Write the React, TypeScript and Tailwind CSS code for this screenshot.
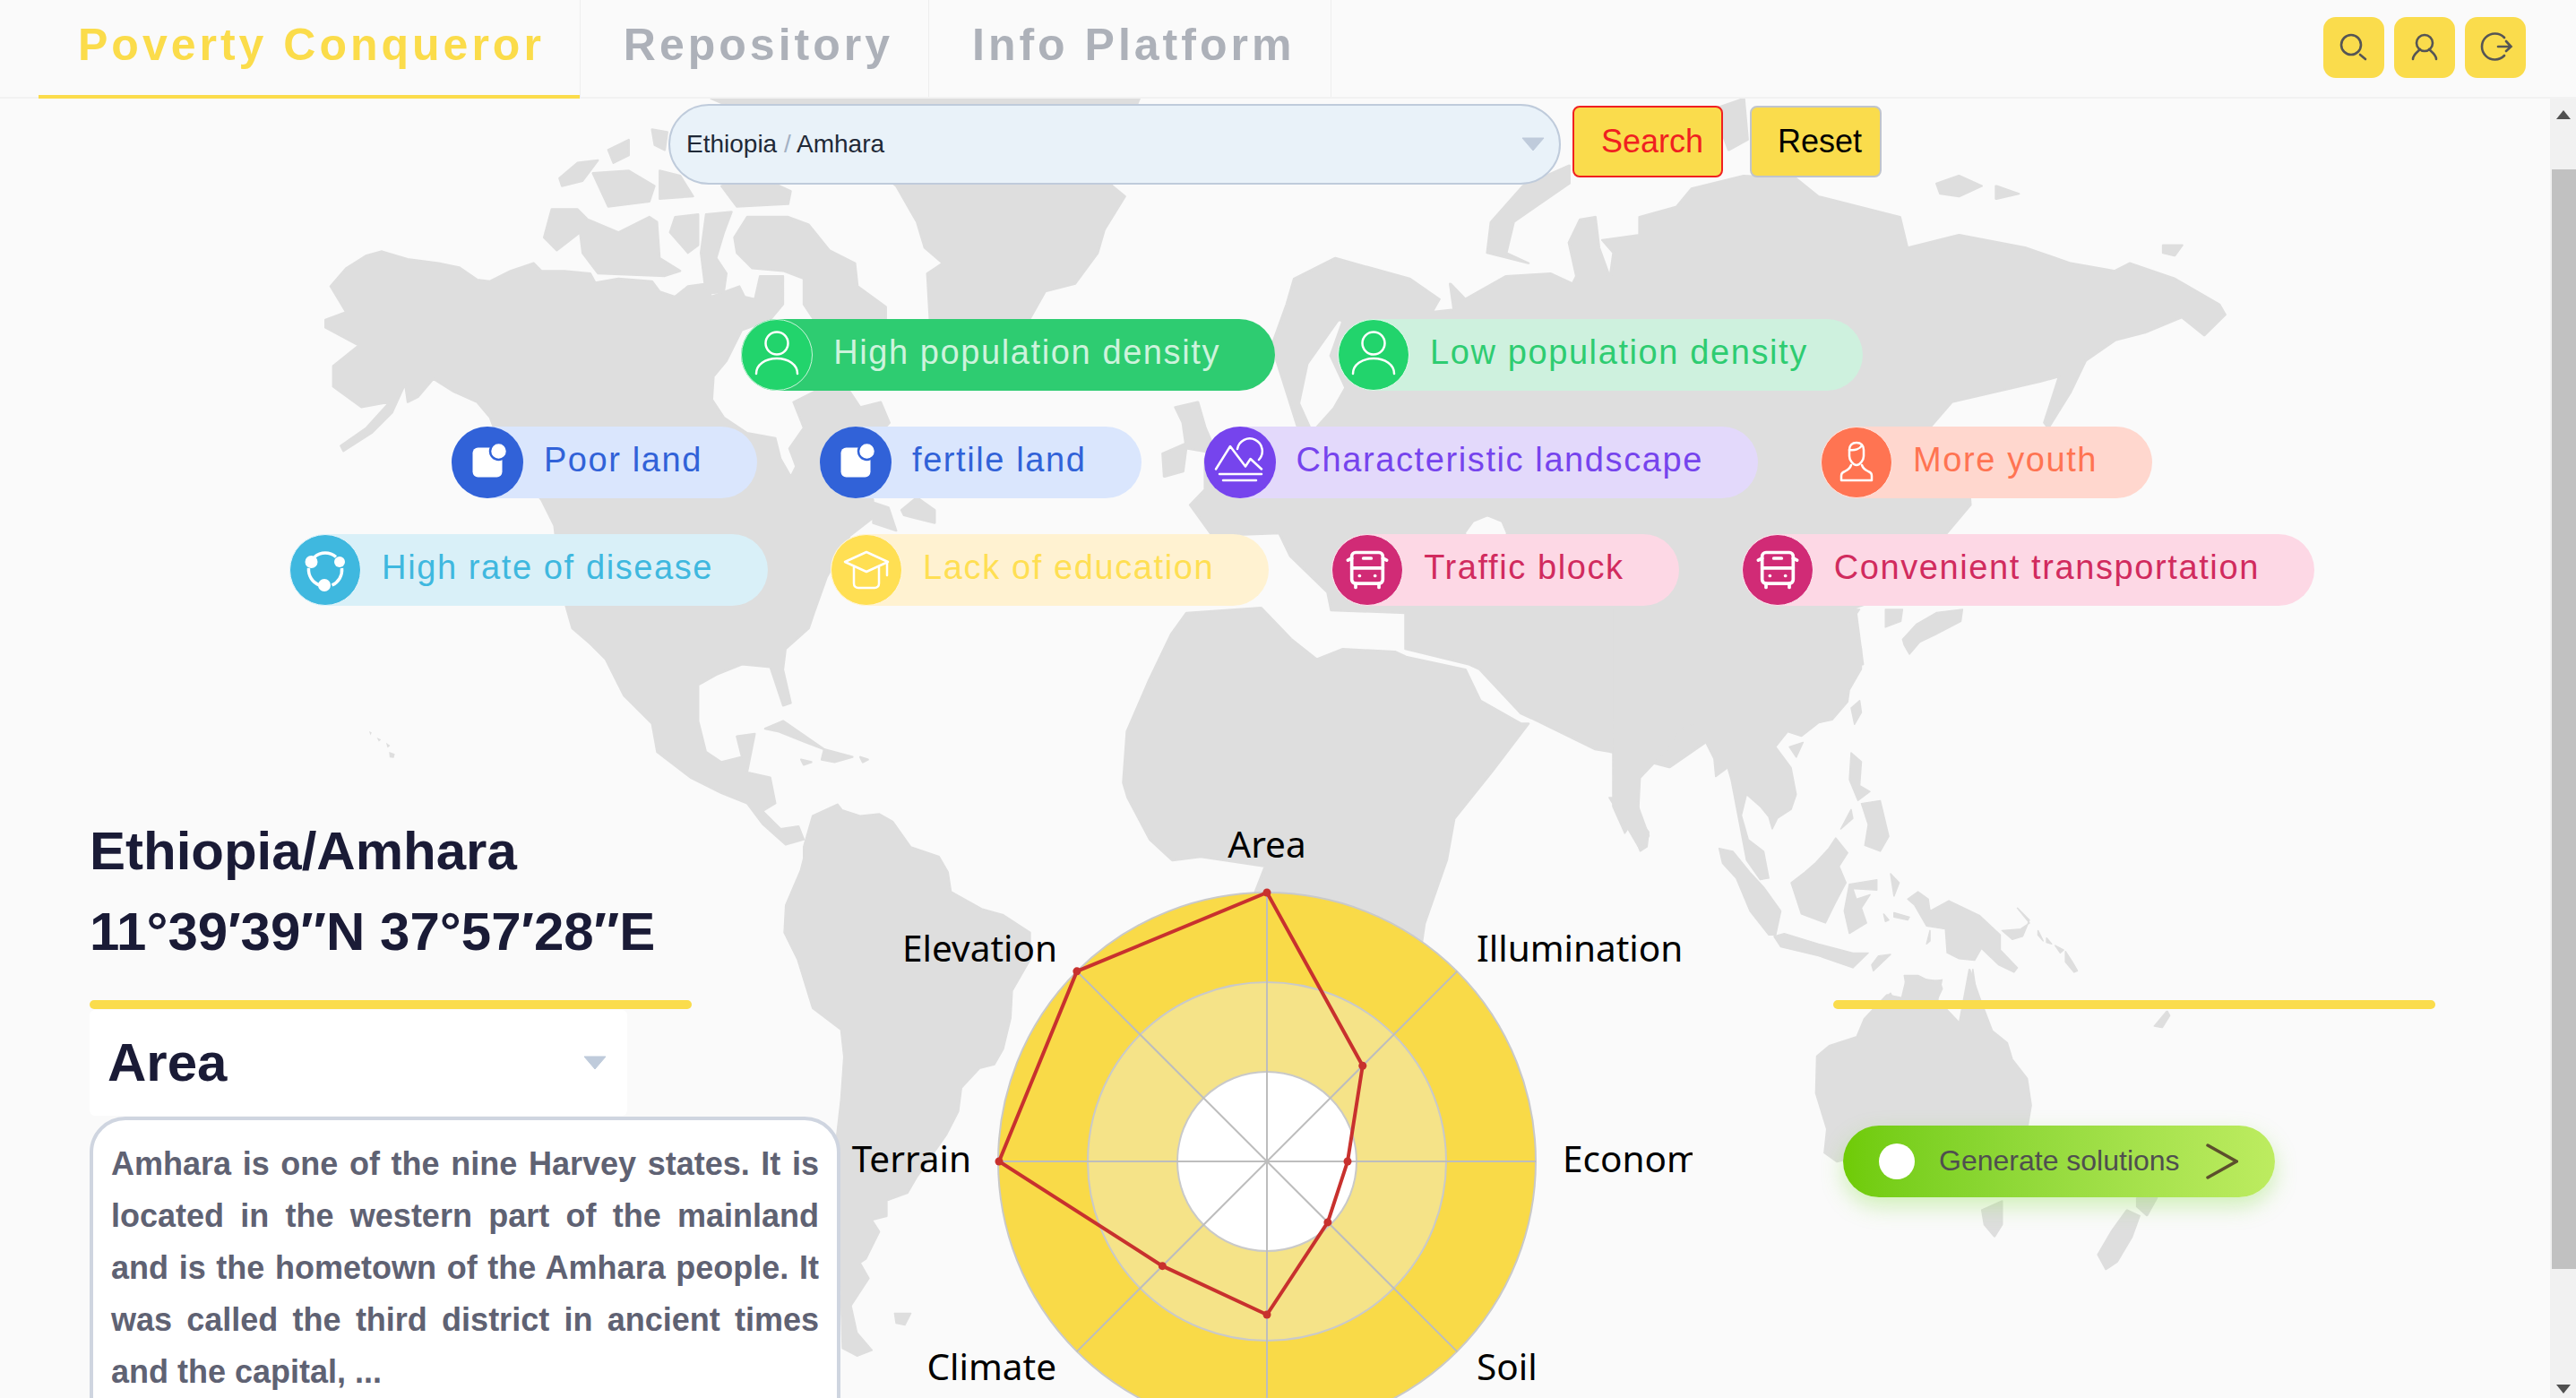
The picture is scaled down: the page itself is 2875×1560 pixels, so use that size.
import { BusFront } from "lucide-react";
import type { ReactNode } from "react";

const iconProps = {
  fill: "none",
  stroke: "currentColor",
  strokeWidth: 2.5,
  strokeLinecap: "round" as const,
  strokeLinejoin: "round" as const,
};

function PersonIcon() {
  return (
    <svg width="58" height="58" viewBox="0 0 58 58" {...iconProps} className="text-white">
      <circle cx="29" cy="16" r="12.5" />
      <path d="M6 50c0-10 10-17 23-17s23 7 23 17" />
    </svg>
  );
}

function LandIcon() {
  return (
    <svg width="58" height="58" viewBox="0 0 58 58">
      <rect x="12.500" y="12.500" width="33" height="33" rx="6" fill="#fff" />
      <circle cx="41.500" cy="16.500" r="9.500" fill="#fff" stroke="#3162d8" strokeWidth="2.500" />
    </svg>
  );
}

function LandscapeIcon() {
  return (
    <svg width="58" height="58" viewBox="0 0 58 58" {...iconProps} className="text-white">
      <path d="M2 36.500 18 11l17 22.500 5.600-8.500L53 36.500" />
      <path d="M26 14a14 14 0 1 1 24 12" />
      <path d="M6 42h47M10 49h37" />
    </svg>
  );
}

function YouthIcon() {
  return (
    <svg width="58" height="58" viewBox="0 0 58 58" {...iconProps} className="text-white">
      <path d="M21 15c0-5 3-8 8-8s8 3 8 8v7c0 4-4 10-8 10s-8-6-8-10z" />
      <path d="M21 15c6 1 12-1 14-5" />
      <path d="M23 32c-1 3-3 5-7 7-3 1-4 3-4 5v5h34v-5c0-2-1-4-4-5-4-2-6-4-7-7" />
    </svg>
  );
}

function DiseaseIcon() {
  return (
    <svg width="58" height="58" viewBox="0 0 58 58">
      <path d="M17 14.500a18.500 18.500 0 0 1 24 0M10.500 27a18.500 18.500 0 0 0 12 19M47.500 27a18.500 18.500 0 0 1-11 19" fill="none" stroke="#fff" strokeWidth="3.500" />
      <circle cx="13.500" cy="20" r="7" fill="#fff" />
      <circle cx="45" cy="20" r="6" fill="#fff" />
      <circle cx="28" cy="46" r="7" fill="#fff" />
    </svg>
  );
}

function CapIcon() {
  return (
    <svg width="58" height="58" viewBox="0 0 58 58" {...iconProps} className="text-white">
      <path d="M29 9 5 20l24 11 24-11z" />
      <path d="M15 26v18c0 3 2 5 5 5h18c3 0 5-2 5-5V26" />
      <path d="M52 21v14" />
    </svg>
  );
}

type Tag = {
  label: string;
  icon: ReactNode;
  pill: string;
  circle: string;
  text: string;
};

const bus = <BusFront size={52} strokeWidth={1.7} color="#fff" />;

const rows: Tag[][] = [
  [
    { label: "High population density", icon: <PersonIcon />, pill: "bg-[#2ecc71]", circle: "bg-[#22d46c] border border-[#c9f5da]", text: "text-[#cdf3dc]" },
    { label: "Low population density", icon: <PersonIcon />, pill: "bg-[#cef1de]", circle: "bg-[#22d46c] border border-[#e4f9ec]", text: "text-[#2ecc71]" },
  ],
  [
    { label: "Poor land", icon: <LandIcon />, pill: "bg-[#dae6fd]", circle: "bg-[#3162d8]", text: "text-[#3162d8]" },
    { label: "fertile land", icon: <LandIcon />, pill: "bg-[#dae6fd]", circle: "bg-[#3162d8]", text: "text-[#3162d8]" },
    { label: "Characteristic landscape", icon: <LandscapeIcon />, pill: "bg-[#e3d9fb]", circle: "bg-[#7644ed]", text: "text-[#7644ed]" },
    { label: "More youth", icon: <YouthIcon />, pill: "bg-[#ffd7ce]", circle: "bg-[#ff7452] border border-[#ffe5df]", text: "text-[#ff7452]" },
  ],
  [
    { label: "High rate of disease", icon: <DiseaseIcon />, pill: "bg-[#d9f0f8]", circle: "bg-[#3fb8df] border border-[#e6f6fb]", text: "text-[#3fb8df]" },
    { label: "Lack of education", icon: <CapIcon />, pill: "bg-[#fff2d1]", circle: "bg-[#ffdf53] border border-[#fff6dc]", text: "text-[#ffdf53]" },
    { label: "Traffic block", icon: bus, pill: "bg-[#fdd8e5]", circle: "bg-[#d12b76] border border-[#fde6ee]", text: "text-[#d12b5e]" },
    { label: "Convenient transportation", icon: bus, pill: "bg-[#fdd8e5]", circle: "bg-[#d12b76] border border-[#fde6ee]", text: "text-[#d12b5e]" },
  ],
];

// continents, traced in the coordinates of whichever crop showed them best
const northAmerica = [
  "120,365 150,330 190,305 220,297 270,312 330,320 370,328 405,352 430,355 470,335 515,320 530,335 575,335 625,340 635,358 680,350 745,355 760,375 790,385 815,365 850,360 860,385 915,365 925,385 945,390 955,345 1000,345 1000,400 975,430 920,450 890,510 865,540 862,585 885,620 930,650 985,660 995,700 1015,735 1025,715 1012,680 1040,640 1020,590 1060,570 1130,570 1150,600 1190,590 1207,630 1180,660 1150,720 1175,780 1175,815 1130,850 1085,930 1060,1000 1050,1030 1005,1070 1000,1110 1015,1175 1000,1180 975,1105 920,1100 870,1120 835,1140 835,1210 850,1270 880,1290 920,1280 910,1240 945,1235 930,1310 975,1320 985,1370 960,1385 995,1420 1030,1415 1040,1440 1005,1450 960,1410 930,1370 880,1350 820,1320 755,1270 745,1215 690,1160 655,1090 625,1060 590,1030 570,960 555,830 530,780 460,700 430,620 405,590 360,570 320,545 290,580 270,590 265,555 240,610 200,650 145,685 140,675 190,640 235,590 180,600 125,560 125,520 175,480 110,445 110,430 150,415",
  "905,270 930,230 1010,230 1050,245 1090,295 1140,320 1145,365 1200,405 1200,430 1100,430 1060,430 1040,400 1040,350 1000,335 940,330 910,300",
  "535,270 550,215 600,215 620,235 680,260 740,230 755,240 760,310 800,335 770,345 640,340 610,300 605,260 560,295",
  "790,230 835,225 835,285 815,300 780,260",
  "850,225 900,220 885,260 870,310 890,340 885,375 850,380 840,300",
  "565,155 600,125 640,120 610,160 570,170",
  "630,145 700,140 750,170 740,200 660,210",
  "660,100 700,80 700,110 670,125",
  "880,170 950,150 1015,180 1010,205 910,210",
  "760,140 800,150 825,190 760,195",
  "745,60 775,65 770,100 750,90",
  "860,0 1693,0 1650,100 1639,169 1665,190 1625,255 1612,300 1568,360 1510,375 1480,428 1285,428 1280,340 1310,320 1275,290 1260,240 1220,170 1170,130 1000,60",
  "965,1225 1000,1210 1080,1265 1040,1250 990,1230",
  "1080,1265 1135,1280 1100,1290 1075,1285",
  "1035,1285 1055,1290 1040,1295",
  "1150,1280 1165,1285 1155,1290",
  "1230,800 1260,775 1295,800 1295,825 1235,810",
  "1175,785 1205,795 1220,840 1175,825",
];

// Hawaii is only a few specks: drawn without the outline the rest of the map gets
const hawaii = [
  "195,1230 200,1232 198,1238",
  "210,1242 218,1246 214,1250",
  "228,1252 236,1258 231,1262",
  "234,1270 245,1274 243,1282 235,1281",
];

const eurasiaAfrica = [
  "265,480 285,400 295,350 350,310 400,330 450,350 490,390 480,415 510,410 505,360 525,390 580,345 640,340 670,360 675,345 665,280 680,235 700,230 705,290 720,350 725,300 710,275 760,265 760,230 810,210 830,175 900,150 970,155 1000,190 1110,230 1120,290 1190,265 1280,290 1340,320 1400,335 1420,320 1480,350 1540,400 1548,420 1520,460 1490,425 1440,455 1400,470 1360,510 1340,570 1310,640 1305,630 1325,540 1300,550 1240,570 1180,590 1150,640 1200,700 1205,790 1170,850 1110,960 1050,990 1060,1100 1000,1100 800,1300 720,1270 700,1265 615,1205 600,1195 545,1110 530,1100 445,1070 445,1000 345,995 340,960 290,890 275,845 185,850 155,790 175,760 175,700 300,640",
  "130,1040 150,1000 250,990 290,1050 325,1090 360,1070 430,1075 445,1085 525,1110 545,1170 600,1215 610,1215 560,1310 510,1400 500,1480 470,1604 440,1900 258,2050 200,1700 256,1493 169,1474 131,1481 101,1441 71,1359 65,1330 70,1230 100,1130",
  "135,600 165,590 175,640 190,690 150,680 145,630",
  "118,690 150,670 145,725 120,735",
  "1160,165 1190,150 1220,170 1190,190 1165,185",
  "1240,170 1270,185 1240,195",
  "1465,285 1490,285 1480,305 1465,300",
  "860,20 900,0 905,80 880,100",
  "603,170 665,130 665,165 620,210 590,240 580,300 610,320 555,300 560,240",
];

const seas = [
  "356,435 316,517 305,592 320,640 345,600 360,562 340,500",
  "528,845 538,825 555,815 572,825 578,845",
];

const southeastAsia = [
  "0,0 720,0 690,50 725,130 725,200 690,270 685,310 640,370 600,380 550,425 510,410 475,460 520,530 535,620 520,670 480,700 465,735 455,695 430,660 390,620 375,690 395,770 440,810 455,900 430,905 390,840 345,570 335,530 300,560 295,500 260,420 245,380 190,405 170,455 125,510 80,565 75,680 35,750 0,660",
  "515,460 555,445 535,495",
  "695,330 720,305 725,345 705,385",
  "75,700 105,745 100,795 80,810 65,765",
  "310,800 350,810 400,880 440,930 490,1010 475,1090 455,1090 400,1010 360,900 320,850",
  "470,1095 500,1085 600,1120 700,1150 745,1150 700,1200 600,1160 490,1130",
  "520,915 560,880 590,850 630,800 650,765 685,815 660,860 680,915 650,980 620,1050 550,1020",
  "690,920 770,905 770,940 700,935 710,970 750,955 725,1000 740,1050 690,1085 675,1010",
  "695,480 725,510 720,590 750,610 715,640 690,570",
  "725,650 780,640 805,760 780,810 735,790 745,720",
  "695,670 700,700 665,735",
  "810,885 835,915 820,960",
  "820,1015 865,1030 860,1040 820,1030",
  "790,1020 805,1040 795,1045",
  "755,1190 775,1160 810,1155 760,1210",
  "860,970 890,945 920,970 925,1010 980,975 1070,1025 1130,1090 1130,1140 1180,1200 1170,1215 1125,1190 1075,1135 1055,1175 1010,1170 975,1150 970,1070 915,1060 880,990",
  "1135,1075 1190,1070 1215,1050 1180,1000 1215,1040 1195,1095 1165,1105",
  "1240,1075 1255,1110 1240,1090",
  "1265,1100 1280,1120 1265,1115",
  "1290,1125 1315,1140 1305,1150",
  "1320,1145 1340,1180 1355,1210 1345,1215 1320,1180",
  "845,100 885,50 945,10 1020,0 1015,40 940,85 895,110 865,150 850,120",
  "795,0 845,0 840,40 795,60",
  "850,1225 890,1225 925,1245 960,1240 945,1320 840,1320 855,1260",
  "775,1320 810,1285 825,1320",
  "1035,1320 1050,1205 1065,1320",
  "915,1120 925,1075 925,1110",
];

const southAmerica = [
  "290,150 320,70 405,40 420,55 480,70 545,65 590,85 650,150 745,175 775,215 785,265 890,310 960,325 1050,370 1050,440 990,520 985,590 960,670 930,710 880,720 820,770 810,830 770,890 670,1000 640,1040 570,1060 570,1100 520,1110 545,1140 500,1210 480,1220 510,1260 450,1330 470,1400 520,1445 470,1460 420,1440 400,900 415,800 425,690 415,620 320,565 270,440 225,370 230,300 280,210 290,180",
  "595,1350 650,1350 630,1380 600,1375",
];

const oceania = [
  "50,295 75,260 130,230 145,170 190,90 220,100 230,30 295,45 300,70 290,105 335,185 355,5 375,100 400,210 430,250 440,305 470,370 478,460 470,540 400,700 300,660 180,610 90,650 65,620 70,540 48,420",
  "380,810 420,780 420,860 405,900 385,860",
  "690,770 730,770 710,830 690,800",
  "670,810 695,830 680,900 650,985 628,1010 612,960 640,880",
  "725,195 750,145 755,160 740,200",
];

const eastAfricaBits = ["1370,0 1415,0 1440,100 1425,135 1395,60"];

function WorldMap() {
  const shape = (list: string[]) => list.map((p) => <polygon key={p} points={p} />);
  return (
    <svg
      viewBox="0 0 2875 1560"
      className="absolute left-0 top-0 h-[1560px] w-[2875px]"
      fill="#dedede"
      stroke="#dedede"
      strokeWidth="4"
      strokeLinejoin="round"
    >
      <g transform="translate(300 110) scale(0.574)">
        {shape(northAmerica)}
        <g stroke="none">{shape(hawaii)}</g>
      </g>
      <g transform="translate(1200 110) scale(0.829 0.574)">
        {shape(eurasiaAfrica)}
        <g fill="#fafafa" stroke="#fafafa">{shape(seas)}</g>
      </g>
      <g transform="translate(1800 680) scale(0.3827 0.3333)">{shape(southeastAsia)}</g>
      <g transform="translate(800 880) scale(0.3333 0.4337)">{shape(southAmerica)}</g>
      <g transform="translate(2000 1080) scale(0.558 0.3333)">{shape(oceania)}</g>
      <g transform="translate(940 890) scale(0.625 0.427)">{shape(eastAfricaBits)}</g>
    </svg>
  );
}

const CX = 475;
const CY = 391;
const axes = [300, 151, 90, 96, 171, 165, 299, 300];

const labels = [
  { text: "Area", x: 475, y: 52, anchor: "middle" },
  { text: "Illumination", x: 709, y: 168, anchor: "start" },
  { text: "Economy", x: 805, y: 403, anchor: "start" },
  { text: "Soil", x: 709, y: 635, anchor: "start" },
  { text: "Climate", x: 240, y: 635, anchor: "end" },
  { text: "Terrain", x: 145, y: 403, anchor: "end" },
  { text: "Elevation", x: 241, y: 168, anchor: "end" },
];

function polar(r: number, i: number) {
  const a = (i * Math.PI) / 4 - Math.PI / 2;
  return [CX + r * Math.cos(a), CY + r * Math.sin(a)];
}

function Radar() {
  const pts = axes.map((r, i) => polar(r, i));
  return (
    <svg width="950" height="782" viewBox="0 0 950 782" className="shrink-0 font-['Noto_Sans',sans-serif]">
      <circle cx={CX} cy={CY} r="300" fill="#f9da48" stroke="#c9c9c9" strokeWidth="2" />
      <circle cx={CX} cy={CY} r="200" fill="#f5e388" stroke="#c9c9c9" strokeWidth="2" />
      <circle cx={CX} cy={CY} r="100" fill="#fff" stroke="#c9c9c9" strokeWidth="2" />
      {axes.map((_, i) => {
        const [x, y] = polar(300, i);
        return <line key={i} x1={CX} y1={CY} x2={x} y2={y} stroke="#bdbdbd" strokeWidth="2" />;
      })}
      <polygon
        points={pts.map((p) => p.join(",")).join(" ")}
        fill="none"
        stroke="#c8312e"
        strokeWidth="4"
      />
      {pts.map(([x, y], i) => (
        <circle key={i} cx={x} cy={y} r="4.500" fill="#c8312e" />
      ))}
      {labels.map((l) => (
        <text key={l.text} x={l.x} y={l.y} textAnchor={l.anchor as "start"} fontSize="40.500" fill="#000">
          {l.text}
        </text>
      ))}
    </svg>
  );
}

function Caret() {
  return (
    <svg width="26" height="16" viewBox="0 0 26 16">
      <path d="M1 1h24L13 15z" fill="#bfcbdb" stroke="#bfcbdb" strokeLinejoin="round" />
    </svg>
  );
}

const headerIconProps = {
  fill: "none",
  stroke: "#555",
  strokeWidth: 2.6,
  strokeLinecap: "round" as const,
};

export default function App() {
  return (
    <div className="relative flex h-[1560px] w-[2875px] flex-col overflow-hidden bg-[#fafafa] font-['Liberation_Sans',Arial,sans-serif]">
      <WorldMap />

      {/* Top bar */}
      <header className="relative flex h-[110px] shrink-0 items-start justify-between border-b-2 border-[#f2f2f2] bg-[#fafafa] pl-[43px] pr-[56px]">
        <nav className="flex text-[50px] font-bold leading-[100px] tracking-[4px]">
          <div className="h-[110px] border-b-4 border-[#fbdc4a] pl-[44px] pr-[39px] text-[#fbdc4a]">Poverty Conqueror</div>
          <div className="h-[108px] border-x border-[#eeeeee] pl-[48px] pr-[39px] text-[#adb1b9]">Repository</div>
          <div className="h-[108px] border-r border-[#eeeeee] pl-[48px] pr-[40px] text-[#adb1b9]">Info Platform</div>
        </nav>
        <div className="mt-[19px] flex gap-[11px]">
          <button className="h-[68px] w-[68px] rounded-[14px] bg-[#fadc4c]">
            <svg width="68" height="68" viewBox="0 0 68 68" {...headerIconProps}>
              <circle cx="31" cy="31" r="11" />
              <path d="M41 42l6 5" />
            </svg>
          </button>
          <button className="h-[68px] w-[68px] rounded-[14px] bg-[#fadc4c]">
            <svg width="68" height="68" viewBox="0 0 68 68" {...headerIconProps}>
              <circle cx="34" cy="29" r="9" />
              <path d="M21 47c0-5 5-8 8-11M47 47c0-5-5-8-8-11" />
            </svg>
          </button>
          <button className="h-[68px] w-[68px] rounded-[14px] bg-[#fadc4c]">
            <svg width="68" height="68" viewBox="0 0 68 68" {...headerIconProps}>
              <path d="M44 23a14.500 14.500 0 1 0 0 20" />
              <path d="M37 33h14M46 27l5.500 6-5.500 5" />
            </svg>
          </button>
        </div>
      </header>

      <div className="relative flex min-h-0 flex-1">
        <main className="flex min-w-0 flex-1 flex-col">
          {/* Region search */}
          <div className="flex justify-center gap-[13px] pt-[6px]">
            <div className="flex h-[90px] w-[996px] items-center justify-between rounded-[45px] border-2 border-[#bfcbdb] bg-[#e9f2f9] pl-[18px] pr-[16px]">
              <span className="text-[28px] text-[#1f2937]">
                Ethiopia <span className="text-[#a3b1c4]">/</span> Amhara
              </span>
              <Caret />
            </div>
            <button className="mt-[2px] h-[80px] w-[168px] rounded-[8px] border-2 border-[#f02020] bg-[#fadc4c] pl-[30px] text-left text-[36px] leading-[74px] text-[#f02020]">
              Search
            </button>
            <button className="ml-[17px] mt-[2px] h-[80px] w-[147px] rounded-[8px] border-2 border-[#c0c4cc] bg-[#fadc4c] pl-[29px] text-left text-[36px] leading-[74px] text-black">
              Reset
            </button>
          </div>

          {/* Feature tags */}
          <div className="mt-[150px] flex flex-col gap-[40px] pl-[60px]">
            {rows.map((row, i) => (
              <div key={i} className="flex justify-center gap-[70px]">
                {row.map((tag) => (
                  <div key={tag.label} className={`flex h-[80px] items-center rounded-[40px] pr-[61px] ${tag.pill}`}>
                    <span className={`flex h-[80px] w-[80px] items-center justify-center rounded-full ${tag.circle}`}>
                      {tag.icon}
                    </span>
                    <span className={`ml-[23px] pb-[6px] text-[38px] tracking-[1.6px] ${tag.text}`}>{tag.label}</span>
                  </div>
                ))}
              </div>
            ))}
          </div>

          {/* Lower panels */}
          <div className="mt-[229px] flex">
            <section className="ml-[100px] w-[838px] shrink-0">
              <h1 className="text-[60px] font-bold leading-[90px] text-[#1a1b36]">
                Ethiopia/Amhara
                <br />
                11°39′39″N 37°57′28″E
              </h1>
              <div className="mt-[31px] h-[10px] w-[672px] rounded-full bg-[#fadc4c]" />
              <div className="mt-px flex h-[118px] w-[600px] items-center justify-between rounded-[6px] bg-white pl-[20px] pr-[23px]">
                <span className="text-[60px] font-bold text-[#1a1b36]">Area</span>
                <Caret />
              </div>
              <div className="mt-px h-[400px] rounded-[40px] border-4 border-[#cfd5e0] bg-white px-[20px] pt-[20px]">
                <p className="text-justify text-[36px] font-bold leading-[58px] text-[#5f6273]">
                  Amhara is one of the nine Harvey states. It is located in the western part of the mainland and is the hometown of the Amhara people. It was called the third district in ancient times and the capital, ...
                </p>
              </div>
            </section>

            <div className="ml-px">
              <Radar />
            </div>

            <aside className="ml-[157px] w-[672px] shrink-0 pt-[211px]">
              <div className="h-[10px] rounded-full bg-[#fadc4c]" />
              <button className="ml-[11px] mt-[130px] flex h-[80px] w-[482px] items-center rounded-[40px] bg-gradient-to-r from-[#6fcb05] to-[#bdec60] pl-[40px] shadow-[0_10px_24px_rgba(130,220,60,0.35)]">
                <span className="h-[40px] w-[40px] rounded-full bg-white" />
                <span className="ml-[27px] pb-[3px] text-[32px] text-[#4f4f4f]">Generate solutions</span>
                <svg width="36" height="40" viewBox="0 0 36 40" className="ml-[29px]" fill="none" stroke="#5c4f2c" strokeWidth="3.500" strokeLinecap="round">
                  <path d="M2 2l32 18L2 38" />
                </svg>
              </button>
            </aside>
          </div>
        </main>

        {/* Scrollbar */}
        <div className="flex w-[29px] shrink-0 flex-col items-end bg-[#f1f1f1]">
          <div className="flex h-[79px] w-full items-start justify-center pt-[13px]">
            <svg width="16" height="10" viewBox="0 0 16 10">
              <path d="M8 0l8 10H0z" fill="#505050" />
            </svg>
          </div>
          <div className="h-[1227px] w-[27px] bg-[#c1c1c1]" />
          <div className="flex w-full flex-1 items-end justify-center pb-[5px]">
            <svg width="16" height="10" viewBox="0 0 16 10">
              <path d="M8 10l8-10H0z" fill="#505050" />
            </svg>
          </div>
        </div>
      </div>
    </div>
  );
}
